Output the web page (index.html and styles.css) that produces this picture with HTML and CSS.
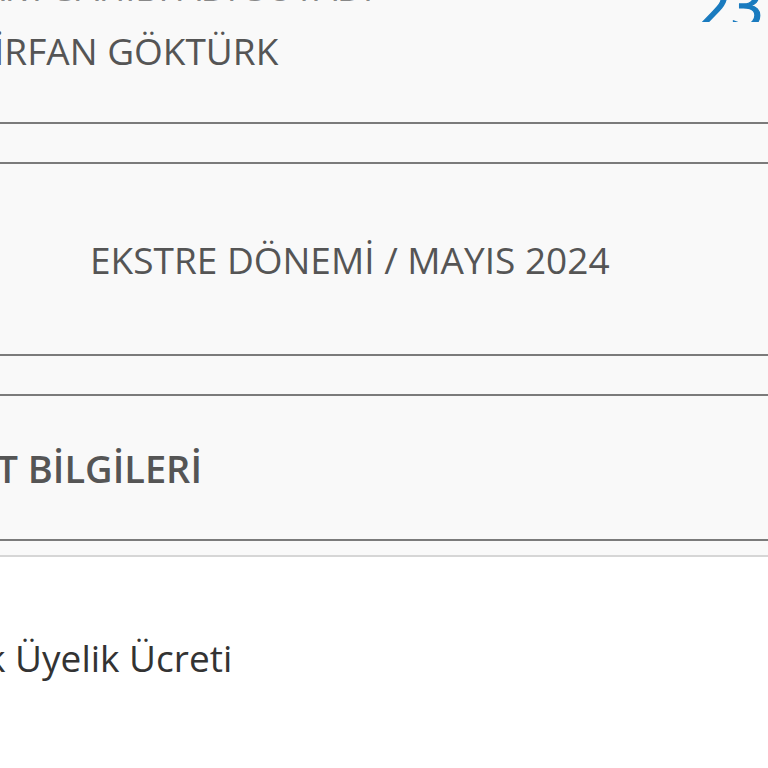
FILE: index.html
```
<!DOCTYPE html>
<html lang="tr">
<head>
<meta charset="utf-8">
<link rel="stylesheet" href="styles.css">
</head>
<body>
<div class="page">
  <header class="head">
    <div class="head-top">
      <span class="head-label">KART SAHİBİ ADI SOYADI</span>
      <span class="day">23</span>
    </div>
    <div class="name">İRFAN GÖKTÜRK</div>
  </header>
  <div class="gap"></div>
  <section class="period">
    <span class="period-text">EKSTRE DÖNEMİ / MAYIS 2024</span>
  </section>
  <div class="gap"></div>
  <section class="title">
    <div class="title-box">
      <h2 class="title-text">KART BİLGİLERİ</h2>
    </div>
  </section>
  <div class="gap gap-small"></div>
  <div class="item">
    <span class="item-text">Yıllık Üyelik Ücreti</span>
  </div>
</div>
</body>
</html>
```

FILE: styles.css
```
html, body {
  margin: 0;
  padding: 0;
  background: #ffffff;
}
body {
  font-family: "Open Sans", "Noto Sans", sans-serif;
  overflow: hidden;
  width: 768px;
  height: 768px;
}
.page {
  display: flex;
  flex-direction: column;
}
.head {
  background: #f9f9f9;
  height: 122px;
  border-bottom: 2px solid #7b7b7b;
  display: flex;
  flex-direction: column;
}
.head-top {
  display: flex;
  justify-content: space-between;
  align-items: flex-end;
  height: 22px;
  overflow: hidden;
}
.head-label {
  font-size: 36px;
  color: #888;
  line-height: 1;
  margin-bottom: 16px;
  margin-left: -40px;
}
.day {
  font-family: "Open Sans", sans-serif;
  font-size: 56px;
  font-weight: 400;
  -webkit-text-stroke: 1.3px #1a7bbf;
  line-height: 1;
  color: #1a7bbf;
  margin-right: 5px;
  margin-bottom: -11px;
}
.name {
  font-size: 37px;
  color: #555;
  line-height: 1;
  margin-top: 10px;
  margin-left: -6px;
}
.gap {
  background: #f9f9f9;
  height: 38px;
  border-bottom: 2px solid #7b7b7b;
}
.gap-small {
  height: 14px;
  border-bottom: 2px solid #d6d6d6;
}
.period {
  background: #f9f9f9;
  height: 190px;
  border-bottom: 2px solid #7b7b7b;
  display: flex;
  align-items: center;
  padding-left: 90px;
}
.period-text {
  font-size: 37px;
  color: #555;
}
.title {
  background: #f9f9f9;
  height: 143px;
  border-bottom: 2px solid #7b7b7b;
  display: flex;
  align-items: center;
}
.title-box {
  width: 202px;
  display: flex;
  justify-content: flex-end;
  white-space: nowrap;
}
.title-text {
  margin: 0;
  font-size: 38px;
  font-weight: 600;
  color: #555;
}
.item {
  background: #ffffff;
  height: 200px;
  display: flex;
  align-items: center;
}
.item-text {
  font-size: 37px;
  color: #333;
  margin-left: -72px;
}
```
